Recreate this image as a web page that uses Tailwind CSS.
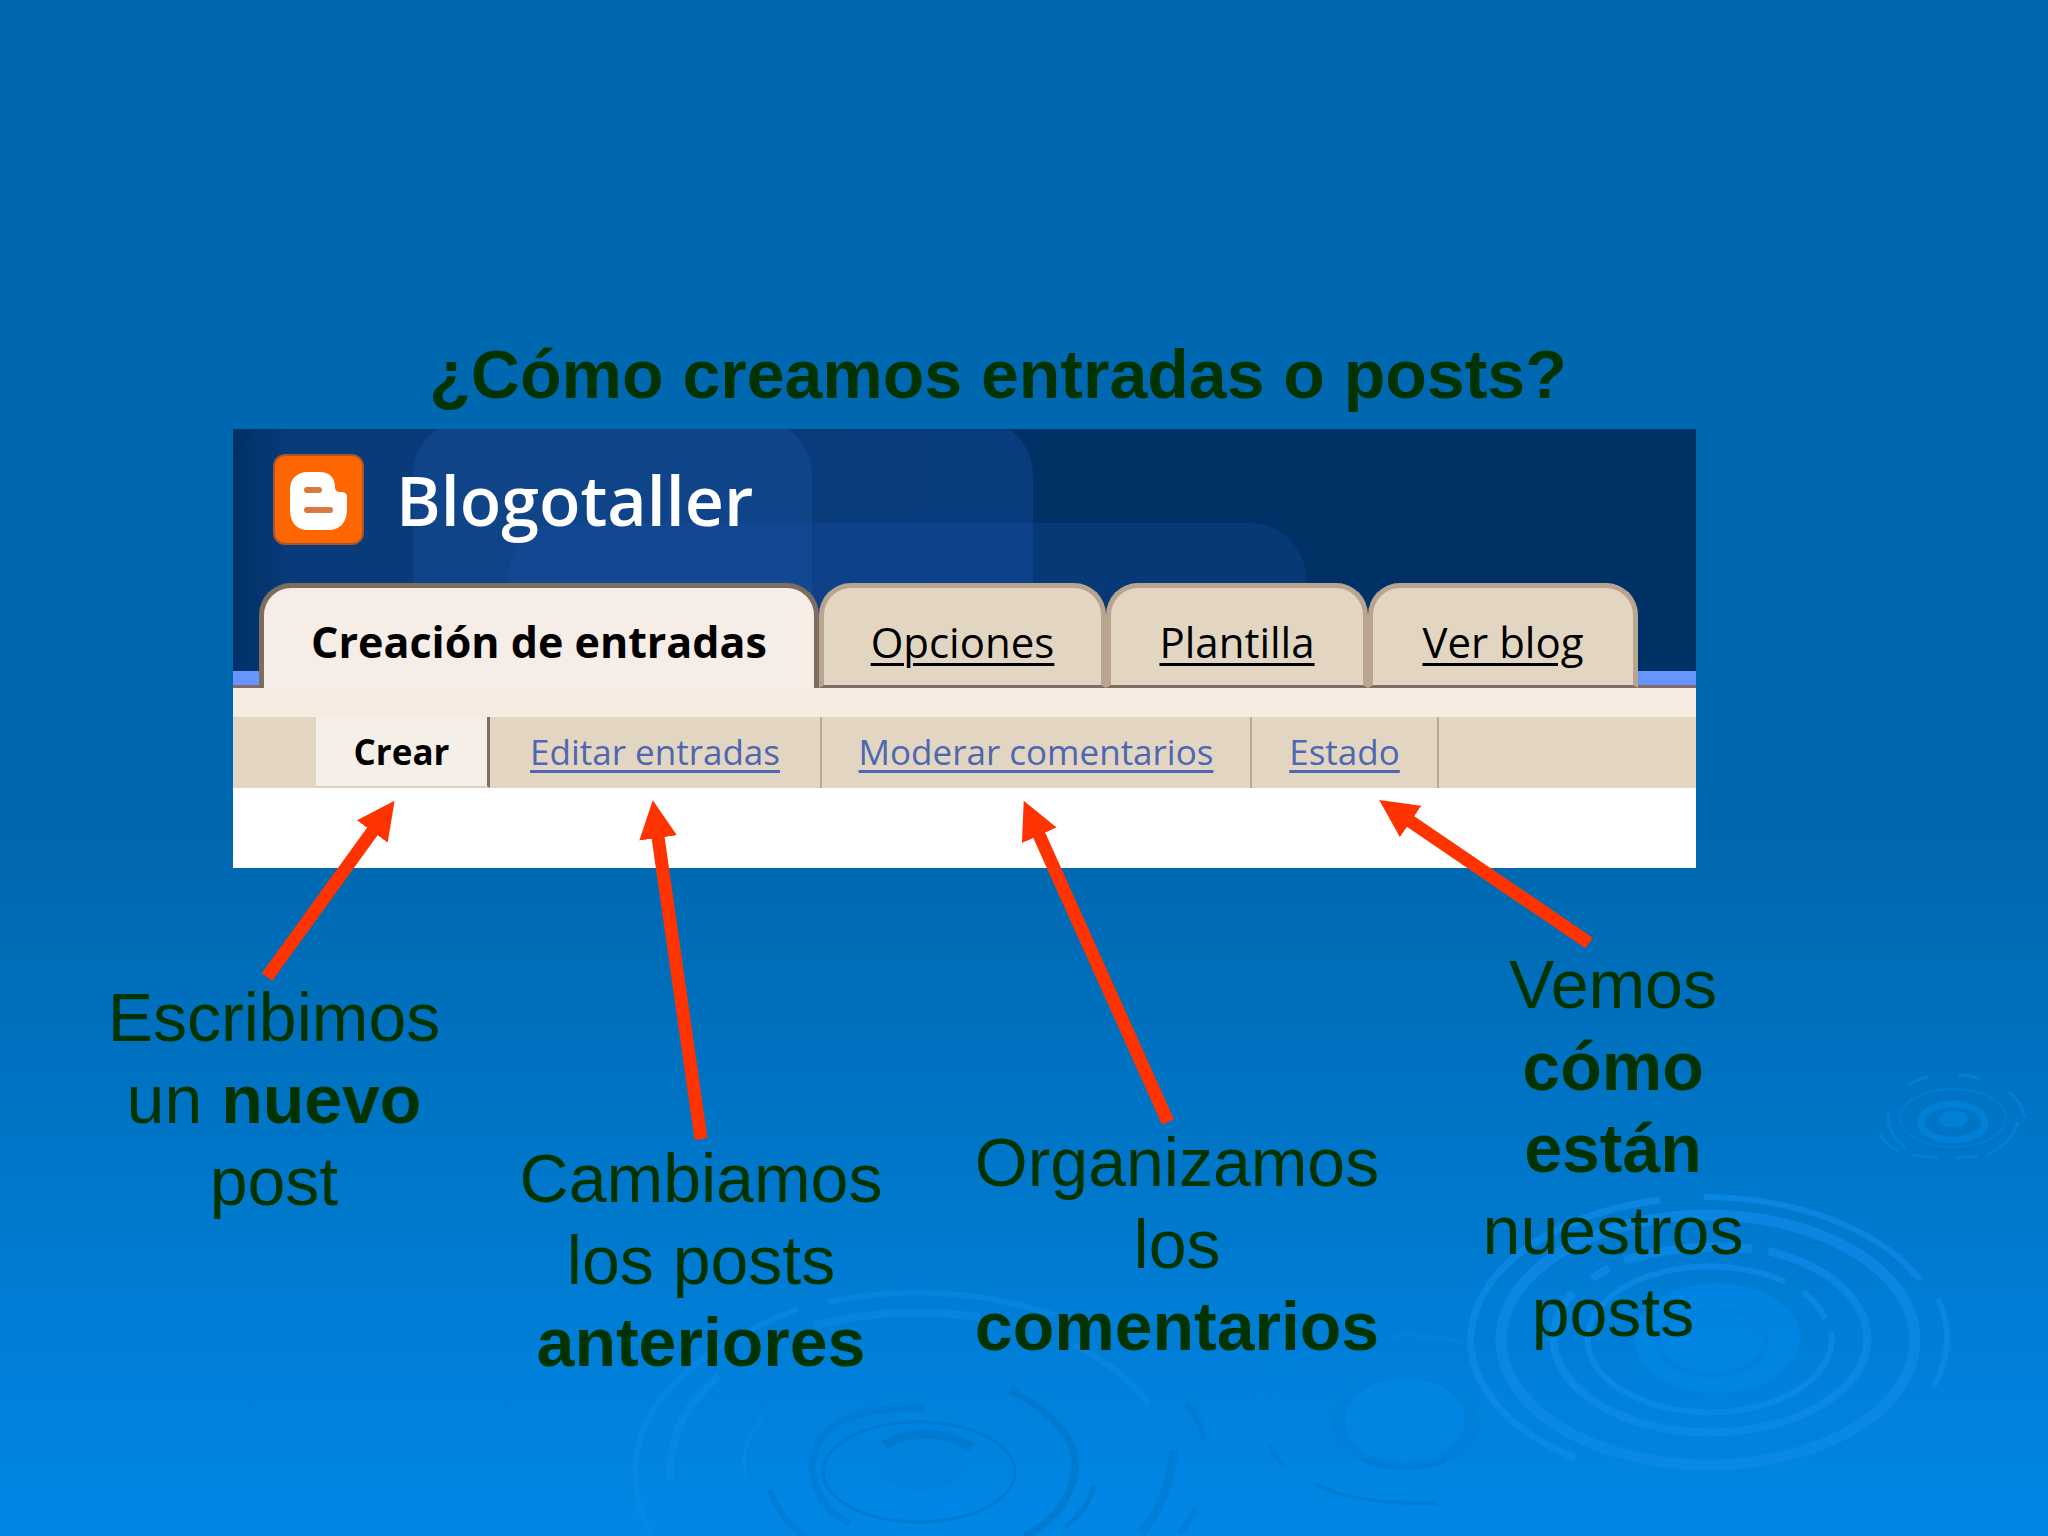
<!DOCTYPE html>
<html lang="es">
<head>
    <meta charset="UTF-8">
    <meta name="viewport" content="width=device-width, initial-scale=1.0">
    <title>¿Cómo creamos entradas o posts?</title>
    <script src="https://cdn.jsdelivr.net/npm/@tailwindcss/browser@4"></script>
</head>
<body class="bg-[#0068b0]">
    <main class="relative min-h-screen overflow-hidden bg-linear-to-b from-[#0068b0] from-55% to-[#0086e4] to-98% pt-[333px] font-['Liberation_Sans',Arial,sans-serif] text-[68px] leading-[82px] text-[#003300]">

        <!-- Water ripples -->
        <svg class="absolute inset-0 h-full w-full" viewBox="0 0 2048 1536" preserveAspectRatio="xMinYMin slice" fill="none" aria-hidden="true">
            <!-- right, large -->
            <g stroke="#0c8ae6" stroke-opacity=".8">
                <path stroke-width="6" d="M1704 1197A239 143 0 0 1 1920 1280M1938 1299A239 143 0 0 1 1933 1387"/>
                <path stroke-width="7" d="M1660 1200A239 143 0 0 0 1575 1458"/>
                <ellipse cx="1708" cy="1340" rx="207" ry="125" stroke-width="11"/>
                <path stroke-width="8" d="M1768 1251A157 94 0 1 1 1573 1293M1592 1278L1609 1268"/>
                <path stroke-width="9" d="M1624 1260Q1690 1242 1752 1249"/>
                <path stroke-width="6" d="M1785 1282A122 73 0 1 0 1831 1332M1803 1292Q1819 1304 1825 1319"/>
            </g>
            <ellipse cx="1717" cy="1338" rx="83" ry="55" fill="#0087e5" fill-opacity=".75"/>
            <ellipse cx="1712" cy="1342" rx="54" ry="33" stroke="#007fdb" stroke-width="6" stroke-opacity=".6"/>
            <!-- right, small -->
            <g stroke="#0080d6">
                <ellipse cx="1953" cy="1119" rx="14" ry="8" fill="#0080d6"/>
                <ellipse cx="1953" cy="1122" rx="32" ry="18" stroke-width="7"/>
                <ellipse cx="1953" cy="1118" rx="53" ry="29" stroke-width="2" stroke-opacity=".7"/>
                <path stroke-width="3" d="M2009 1092Q2023 1104 2025 1118M2018 1122Q2012 1144 1986 1155M1888 1112Q1887 1134 1906 1148M1880 1134Q1884 1144 1898 1151M1958 1075Q1970 1075 1980 1079M1909 1085Q1917 1079 1928 1077M1912 1155L1938 1158M1956 1158L1978 1156"/>
            </g>
            <!-- centre -->
            <ellipse cx="1405" cy="1424" rx="74" ry="46" fill="#0079cc" fill-opacity=".2"/>
            <ellipse cx="1405" cy="1420" rx="60" ry="42" fill="#0085e2"/>
            <g stroke="#0086e0" stroke-width="4" stroke-opacity=".6">
                <path d="M1261 1388Q1249 1420 1262 1446M1274 1374Q1291 1355 1318 1352M1390 1336Q1440 1333 1466 1344M1280 1390Q1270 1405 1272 1425"/>
            </g>
            <path stroke="#0076c8" stroke-width="4" stroke-opacity=".5" d="M1315 1484Q1355 1505 1438 1503M1270 1445Q1273 1457 1284 1465M1362 1460Q1405 1475 1446 1460"/>
            <!-- left -->
            <g stroke="#0989e4" stroke-width="6" stroke-opacity=".7">
                <path d="M828 1302Q940 1278 1055 1315M1074 1345Q1125 1370 1149 1405"/>
                <path d="M798 1309Q640 1370 635 1468Q636 1510 652 1536"/>
                <path stroke-width="8" d="M814 1326Q890 1305 980 1317M719 1376Q666 1420 671 1480"/>
                <path stroke-width="3" stroke-opacity=".5" d="M765 1415Q733 1450 750 1485"/>
            </g>
            <g stroke="#0074c6" stroke-opacity=".65">
                <ellipse cx="919" cy="1472" rx="96" ry="50" stroke-width="3"/>
                <path stroke-width="7" stroke-opacity=".4" d="M925 1408Q815 1405 812 1468Q815 1505 850 1524"/>
                <path stroke-width="9" d="M884 1445Q925 1422 972 1447"/>
                <path stroke-width="7" d="M1010 1390Q1078 1425 1075 1470Q1070 1512 1025 1536"/>
                <path stroke-width="5" d="M1094 1485Q1088 1510 1065 1527"/>
                <path stroke-width="9" stroke-opacity=".4" d="M1174 1450Q1170 1500 1140 1534"/>
                <path stroke-width="6" stroke-opacity=".4" d="M1187 1404Q1200 1420 1204 1440M1196 1508L1180 1534M770 1490Q780 1520 805 1536"/>
            </g>
            <ellipse cx="921" cy="1466" rx="42" ry="24" fill="#007bd2" fill-opacity=".25"/>
        </svg>

        <h1 class="relative pr-[52px] text-center font-bold">¿Cómo creamos entradas o posts?</h1>

        <!-- Blog panel -->
        <section class="relative mt-3.5 ml-[233px] w-5/7 bg-white pb-20 font-['Open_Sans','Trebuchet_MS',sans-serif] text-black">
            <header class="relative overflow-hidden bg-[#003166]">
                <svg class="absolute inset-0 h-full w-full" viewBox="0 0 1463 259" preserveAspectRatio="xMinYMin slice" aria-hidden="true">
                    <defs>
                        <linearGradient id="edge">
                            <stop offset="0" stop-color="#003166"/>
                            <stop offset=".07" stop-color="#093a7a"/>
                            <stop offset="1" stop-color="#093c7c"/>
                        </linearGradient>
                    </defs>
                    <rect x="0" y="-10" width="800" height="300" rx="56" fill="url(#edge)"/>
                    <rect x="180" y="-10" width="399" height="300" rx="56" fill="#2a62b4" fill-opacity=".22"/>
                    <rect x="275" y="94" width="798" height="200" rx="56" fill="#1e55ae" fill-opacity=".24"/>
                </svg>
                <div class="relative flex items-center gap-8 px-10 pt-[25px] pb-[38px]">
                    <svg class="h-[91px] w-[91px]" viewBox="0 0 91 91" role="img" aria-label="Blogger">
                        <rect x="1" y="1" width="89" height="89" rx="11" fill="#ff6600" stroke="#a5562c" stroke-width="2"/>
                        <path fill="#fff" d="M35 18H46C57 18 62 24 62 33C62 37 64 38 68 38Q74 38 74 43V56C74 69 66 76 56 76H35C24 76 17 69 17 56V35C17 25 24 18 35 18Z"/>
                        <path stroke="#d9793f" stroke-width="6" stroke-linecap="round" d="M34 36H46M34 56H57"/>
                    </svg>
                    <p class="text-[68px] leading-[91px] font-semibold text-white">Blogotaller</p>
                </div>
                <nav class="relative flex h-[105px] items-start text-[42px] leading-[60px]">
                    <div class="h-[105px] w-[26px] border-b-3 border-[#7d6d65] bg-linear-to-t from-[#6695ff] from-[14px] to-transparent to-[14px]"></div>
                    <a href="#" class="h-[105px] w-[560px] rounded-t-[32px] border-5 border-b-0 border-[#7d6c60] bg-[#f6ede6] pt-6 text-center text-[43px] font-bold">Creación de entradas</a>
                    <a href="#" class="h-[105px] w-[287px] rounded-t-[32px] border-5 border-b-3 border-[#b9a48f] border-b-[#7d6d65] bg-[#e2d5c1] pt-6 text-center underline decoration-3 underline-offset-5">Opciones</a>
                    <a href="#" class="h-[105px] w-[262px] rounded-t-[32px] border-5 border-b-3 border-[#b9a48f] border-b-[#7d6d65] bg-[#e2d5c1] pt-6 text-center underline decoration-3 underline-offset-5">Plantilla</a>
                    <a href="#" class="h-[105px] w-[270px] rounded-t-[32px] border-5 border-b-3 border-[#b9a48f] border-b-[#7d6d65] bg-[#e2d5c1] pt-6 text-center underline decoration-3 underline-offset-5">Ver blog</a>
                    <div class="h-[105px] flex-1 border-b-3 border-[#7d6d65] bg-linear-to-t from-[#6695ff] from-[14px] to-transparent to-[14px]"></div>
                </nav>
            </header>
            <div class="h-[29px] bg-[#f6ece1]"></div>
            <nav class="flex h-[71px] bg-[#e2d5c2] pl-[83px] text-[35px] leading-[70px] text-[#4d68b0]">
                <a href="#" class="w-[174px] border-r-3 border-b-2 border-r-[#7d6c60] border-b-[#d8d2c4] bg-[#f6efe8] text-center font-bold text-black">Crear</a>
                <a href="#" class="w-[332px] border-r-2 border-[#b9a894] text-center underline decoration-3 underline-offset-5">Editar entradas</a>
                <a href="#" class="w-[430px] border-r-2 border-[#b9a894] text-center underline decoration-3 underline-offset-5">Moderar comentarios</a>
                <a href="#" class="w-[187px] border-r-2 border-[#b9a894] text-center underline decoration-3 underline-offset-5">Estado</a>
            </nav>
        </section>

        <!-- Captions -->
        <section class="relative grid grid-cols-[428fr_426fr_526fr_346fr] pr-[262px] pl-[60px] text-center">
            <p class="pt-[108px]">Escribimos<br>un <b>nuevo</b><br>post</p>
            <p class="pt-[269px]">Cambiamos<br>los posts<br><b>anteriores</b></p>
            <p class="pt-[253px]">Organizamos<br>los<br><b>comentarios</b></p>
            <p class="pt-[75px]">Vemos<br><b>cómo<br>están</b><br>nuestros<br>posts</p>
        </section>

        <!-- Arrows -->
        <svg class="pointer-events-none absolute inset-0 h-full w-full" viewBox="0 0 2048 1536" preserveAspectRatio="xMinYMin slice" aria-hidden="true">
            <defs>
                <marker id="head" markerUnits="userSpaceOnUse" markerWidth="38" markerHeight="38" refX="8" refY="19" orient="auto">
                    <path d="M0 0L38 19L0 38Z" fill="#ff3300"/>
                </marker>
            </defs>
            <g stroke="#ff3300" stroke-width="13">
                <path d="M267 977L377 825" marker-end="url(#head)"/>
                <path d="M701 1139L657 830" marker-end="url(#head)"/>
                <path d="M1168 1122L1036 828" marker-end="url(#head)"/>
                <path d="M1589 943L1404 817" marker-end="url(#head)"/>
            </g>
        </svg>
    </main>
</body>
</html>
